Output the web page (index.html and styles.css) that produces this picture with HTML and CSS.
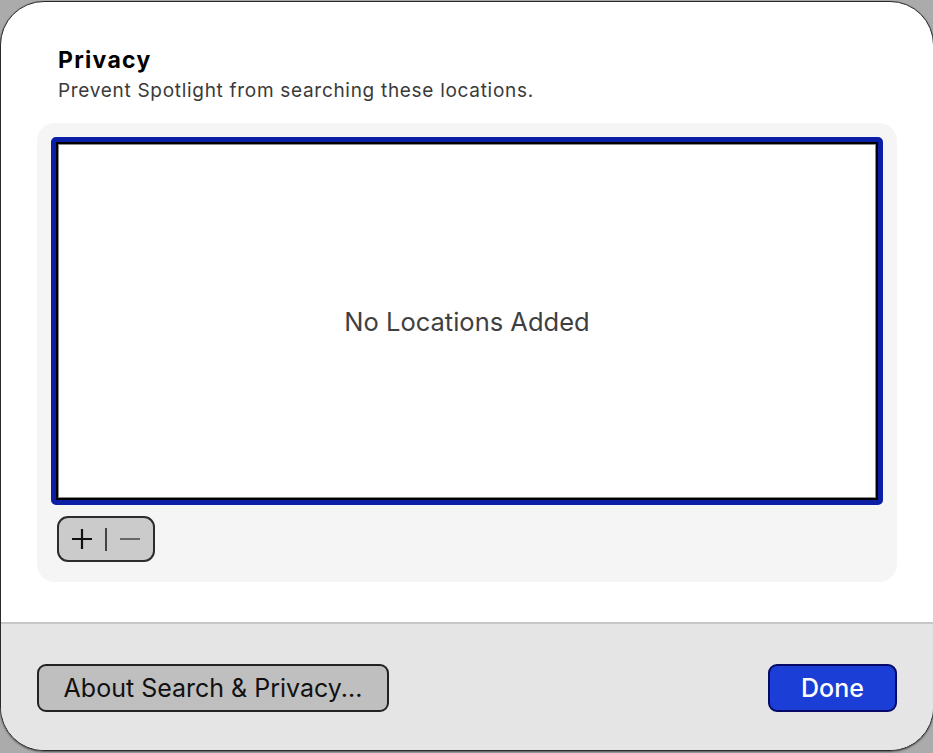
FILE: index.html
```html
<!DOCTYPE html>
<html>
<head>
<meta charset="utf-8">
<link rel="stylesheet" href="styles.css">
</head>
<body>
<div class="window">
  <div class="main">
    <div class="header">
      <div class="title">Privacy</div>
      <div class="subtitle">Prevent Spotlight from searching these locations.</div>
    </div>
    <div class="panel">
      <div class="list">
        <div class="list-inner">
          <span class="empty">No Locations Added</span>
        </div>
      </div>
      <div class="tools">
        <div class="segbtn">
          <svg width="98" height="46" viewBox="0 0 98 46">
            <path d="M25 13 V33 M15 23 H35" stroke="#111" stroke-width="2.2" fill="none"/>
            <path d="M49 12 V35" stroke="#444" stroke-width="2" fill="none"/>
            <path d="M63 23 H83" stroke="#666" stroke-width="2" fill="none"/>
          </svg>
        </div>
      </div>
    </div>
  </div>
  <div class="footer">
    <button class="btn">About Search &amp; Privacy...</button>
    <button class="btn primary">Done</button>
  </div>
</div>
</body>
</html>
```
FILE: styles.css
```css
html, body {
  margin: 0;
  padding: 0;
  background: #ababab;
  width: 933px;
  height: 753px;
  overflow: hidden;
}
.window {
  box-sizing: border-box;
  width: 934px;
  height: 750px;
  margin-top: 1px;
  background: #ffffff;
  border: 1px solid #2a2a2a;
  border-radius: 44px;
  overflow: hidden;
  display: flex;
  flex-direction: column;
  font-family: Inter, "Noto Sans", sans-serif;
  box-shadow: 0 1px 2px rgba(0,0,0,0.5);
}
.main {
  height: 620px;
  display: flex;
  flex-direction: column;
}
.header {
  padding: 44px 0 0 57px;
  height: 80px;
  box-sizing: border-box;
}
.title {
  font-size: 23px;
  font-weight: 700;
  color: #000;
  line-height: 28px;
  letter-spacing: 1.3px;
}
.subtitle {
  font-size: 19px;
  color: #3a3a3a;
  line-height: 24px;
  margin-top: 5px;
  letter-spacing: 0.7px;
  white-space: nowrap;
}
.panel {
  margin: 41px 36px 0 36px;
  background: #f5f5f5;
  border-radius: 18px;
  padding: 14px 14px 20px 14px;
  height: 459px;
  box-sizing: border-box;
  display: flex;
  flex-direction: column;
}
.list {
  height: 368px;
  box-sizing: border-box;
  border: 5px solid #0b1ea6;
  border-radius: 5px;
  display: flex;
}
.list-inner {
  flex: 1;
  border: 2px solid #000;
  background: #fff;
  box-shadow: inset 0 0 0 1px #8a8a8a;
  display: flex;
  align-items: center;
  justify-content: center;
}
.empty {
  font-size: 25.5px;
  color: #3f3f3f;
}
.tools {
  padding: 11px 0 0 6px;
}
.segbtn {
  width: 98px;
  height: 46px;
  box-sizing: border-box;
  background: #cbcbcb;
  border: 2px solid #2c2c2c;
  border-radius: 11px;
  display: flex;
  align-items: center;
  justify-content: center;
}
.segbtn svg {
  display: block;
  margin: -2px;
}
.footer {
  flex: 1;
  background: #e5e5e5;
  border-top: 2px solid #c6c6c6;
  display: flex;
  justify-content: space-between;
  align-items: flex-start;
  padding: 40px 36px 0 36px;
}
.btn {
  height: 48px;
  box-sizing: border-box;
  border: 2px solid #222;
  border-radius: 9px;
  background: #bfbfbf;
  color: #111;
  font-family: Inter, "Noto Sans", sans-serif;
  font-size: 25px;
  padding: 0;
  width: 352px;
}
.btn.primary {
  width: 129px;
  background: #1a3ed6;
  border-color: #050a66;
  color: #fff;
  font-weight: 500;
}
```
